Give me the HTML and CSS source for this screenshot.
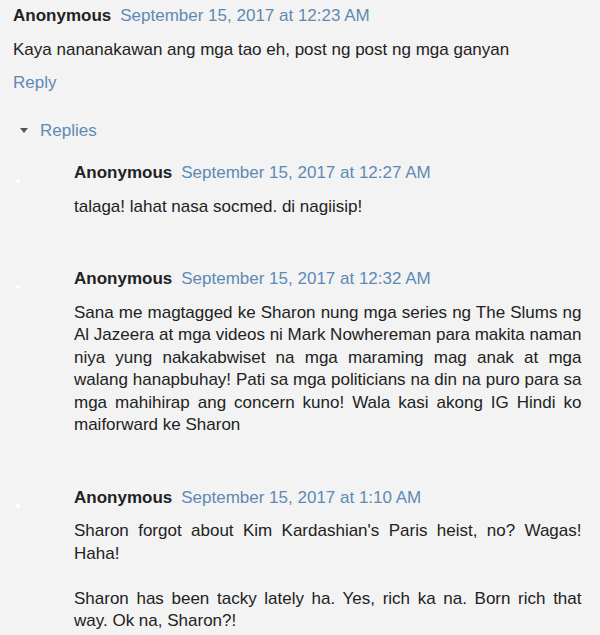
FILE: index.html
```html
<!DOCTYPE html>
<html lang="en">
<head>
    <meta charset="UTF-8">
    <meta name="viewport" content="width=device-width, initial-scale=1.0">
    <title>Comments</title>
    <link rel="stylesheet" href="styles.css">
</head>
<body>
    <div class="comments">
        <!-- Comentario principal -->
        <div class="comment">
            <div class="comment-head">
                <span class="user">Anonymous</span>
                <a class="timestamp" href="#">September 15, 2017 at 12:23 AM</a>
            </div>
            <p class="comment-body">Kaya nananakawan ang mga tao eh, post ng post ng mga ganyan</p>
            <a class="reply-link" href="#">Reply</a>
        </div>

        <!-- Respuestas -->
        <div class="replies-toggle">
            <span class="caret"></span>
            <a class="replies-link" href="#">Replies</a>
        </div>

        <div class="replies">
            <div class="reply">
                <div class="avatar"><span class="dot"></span></div>
                <div class="reply-content">
                    <div class="comment-head">
                        <span class="user">Anonymous</span>
                        <a class="timestamp" href="#">September 15, 2017 at 12:27 AM</a>
                    </div>
                    <p class="comment-body">talaga! lahat nasa socmed. di nagiisip!</p>
                </div>
            </div>

            <div class="reply">
                <div class="avatar"><span class="dot"></span></div>
                <div class="reply-content">
                    <div class="comment-head">
                        <span class="user">Anonymous</span>
                        <a class="timestamp" href="#">September 15, 2017 at 12:32 AM</a>
                    </div>
                    <p class="comment-body">Sana me magtagged ke Sharon nung mga series ng The Slums ng Al Jazeera at mga videos ni Mark Nowhereman para makita naman niya yung nakakabwiset na mga maraming mag anak at mga walang hanapbuhay! Pati sa mga politicians na din na puro para sa mga mahihirap ang concern kuno! Wala kasi akong IG Hindi ko maiforward ke Sharon</p>
                </div>
            </div>

            <div class="reply">
                <div class="avatar"><span class="dot"></span></div>
                <div class="reply-content">
                    <div class="comment-head">
                        <span class="user">Anonymous</span>
                        <a class="timestamp" href="#">September 15, 2017 at 1:10 AM</a>
                    </div>
                    <p class="comment-body">Sharon forgot about Kim Kardashian's Paris heist, no? Wagas! Haha!<br><br>Sharon has been tacky lately ha. Yes, rich ka na. Born rich that way. Ok na, Sharon?!</p>
                </div>
            </div>
        </div>
    </div>
</body>
</html>
```

FILE: styles.css
```css
body {
    margin: 0;
    padding: 0;
    background-color: #f3f3f3;
    font-family: "Liberation Sans", Arial, sans-serif;
    font-size: 17px;
    line-height: 22.5px;
    color: #222222;
}
/*Contenedor de los comentarios*/
.comments {
    padding: 5px 18.5px 0 13px;
}
.comment-head {
    display: flex;
    gap: 9px;
}
.user {
    font-weight: bold;
    color: #222222;
}
.timestamp,
.reply-link,
.replies-link {
    color: #5d8ab4;
    text-decoration: none;
}
.comment-body {
    margin: 11px 0 0 0;
}
.reply-link {
    display: inline-block;
    margin-top: 11px;
}
/*Boton de respuestas*/
.replies-toggle {
    display: flex;
    align-items: center;
    margin-top: 25px;
    padding-left: 7px;
    gap: 12px;
}
.caret {
    width: 0;
    height: 0;
    border-left: 4.5px solid transparent;
    border-right: 4.5px solid transparent;
    border-top: 5px solid #555555;
}
/*Lista de respuestas*/
.replies {
    margin-top: 20px;
}
.reply {
    display: flex;
    margin-top: 50px;
}
.reply:first-child {
    margin-top: 0;
}
.avatar {
    width: 61px;
    flex-shrink: 0;
}
.dot {
    display: block;
    width: 4px;
    height: 4px;
    margin: 17px 0 0 3px;
    border-radius: 50%;
    background-color: #ffffff;
}
.reply-content {
    flex: 1;
}
.reply-content .comment-body {
    text-align: justify;
}
```
